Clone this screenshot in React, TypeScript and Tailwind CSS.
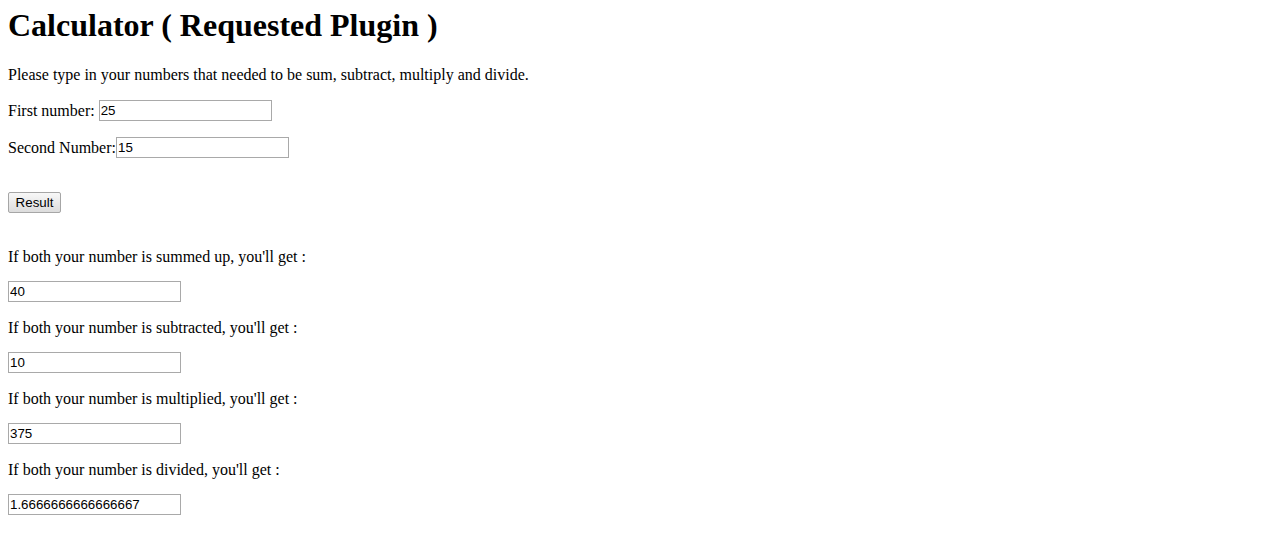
import React from "react";

const serif = "font-['Liberation_Serif','Times_New_Roman',serif]";
const inputCls =
  "block h-[21px] w-[173px] border border-[#a9a9a9] bg-white px-[1px] text-[13.33px] text-black font-['Liberation_Sans',Arial,sans-serif] outline-none";

function Field({ value }: { value: string }) {
  return <input className={inputCls} defaultValue={value} readOnly />;
}

export default function App() {
  const results: [string, string][] = [
    ["If both your number is summed up, you'll get :", "40"],
    ["If both your number is subtracted, you'll get :", "10"],
    ["If both your number is multiplied, you'll get :", "375"],
    ["If both your number is divided, you'll get :", "1.6666666666666667"],
  ];
  return (
    <div className={`min-h-[546px] bg-white px-2 pt-[7px] text-black ${serif}`}>
      <h1 className="text-[32px] font-bold leading-[37px]">Calculator ( Requested Plugin )</h1>
      <p className="mt-[22px] text-[16px] leading-[18px]">
        Please type in your numbers that needed to be sum, subtract, multiply and divide.
      </p>
      <div className="mt-[16px] flex items-center text-[16px] leading-[18px]">
        <span className="whitespace-pre">First number: </span>
        <Field value="25" />
      </div>
      <div className="mt-[16px] flex items-center text-[16px] leading-[18px]">
        <span>Second Number:</span>
        <Field value="15" />
      </div>
      <button className="mt-[34px] block h-[21px] w-[53px] rounded-[2px] border border-[#a6a6a6] bg-gradient-to-b from-[#f8f8f8] to-[#dcdcdc] text-[13.33px] leading-[19px] font-['Liberation_Sans',Arial,sans-serif] text-black">
        Result
      </button>
      <div className="mt-[35px] flex flex-col">
        {results.map(([label, val], i) => (
          <div key={i} className={i === 0 ? "" : "mt-[17px]"}>
            <p className="text-[16px] leading-[18px]">{label}</p>
            <div className="mt-[15px]">
              <Field value={val} />
            </div>
          </div>
        ))}
      </div>
    </div>
  );
}
